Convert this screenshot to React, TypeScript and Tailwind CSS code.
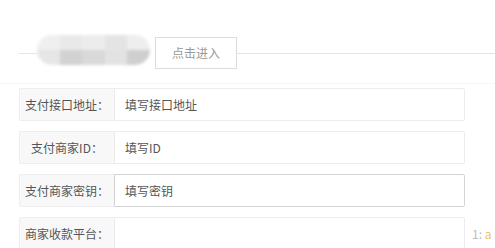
import React from 'react';

const rows = [
  { label: '支付接口地址：', value: '填写接口地址', focus: false },
  { label: '支付商家ID：', value: '填写ID', focus: false },
  { label: '支付商家密钥：', value: '填写密钥', focus: true },
  { label: '商家收款平台：', value: '', focus: false },
];

export default function App() {
  return (
    <div
      className="w-[495px] h-[248px] overflow-hidden bg-white text-[12px] text-[#555]"
      style={{ fontFamily: '"Noto Sans CJK SC", "Microsoft YaHei", sans-serif' }}
    >
      {/* header */}
      <div className="h-[84px] pt-[37px] border-b border-[#f6f6f6]">
        <div className="flex items-center h-[32px]">
          <div className="w-[19px]" />
          <div className="w-[18px] h-px bg-[#e6e6e6]" />
          {/* blurred name */}
          <div className="relative w-[113px] h-[30px] -mt-[6px] rounded-full overflow-hidden blur-[1.5px]">
            <div className="flex h-1/2">
              <div className="flex-1 bg-[#efefef]" />
              <div className="flex-1 bg-[#e9e9e9]" />
              <div className="flex-1 bg-[#ececec]" />
              <div className="flex-1 bg-[#e4e4e4]" />
              <div className="flex-1 bg-[#eeeeee]" />
            </div>
            <div className="flex h-1/2">
              <div className="flex-1 bg-[#e6e6e6]" />
              <div className="flex-1 bg-[#d2d2d2]" />
              <div className="flex-1 bg-[#d9d9d9]" />
              <div className="flex-1 bg-[#e2e2e2]" />
              <div className="flex-1 bg-[#cfcfcf]" />
            </div>
          </div>
          <div className="w-[5px]" />
          <button className="w-[82px] h-[32px] border border-[#dcdcdc] bg-white text-[12px] text-[#999]">
            点击进入
          </button>
          <div className="flex-1 h-px bg-[#e4e4e4]" />
        </div>
      </div>

      {/* form */}
      <div className="pl-[19px] pt-[4px] flex flex-col gap-[10px]">
        {rows.map((r, i) => (
          <div key={i} className="flex items-center">
            <div className="flex w-[446px] h-[33px]">
              <div className="w-[95px] flex items-center justify-center bg-[#f8f8f8] border border-[#eeeeee] border-r-0 rounded-l-[2px] text-[#555] whitespace-nowrap">
                {r.label}
              </div>
              <div
                className={`flex-1 flex items-center pl-[10px] bg-white border ${
                  r.focus ? 'border-[#d4d4d4]' : 'border-[#ececec]'
                } rounded-r-[2px] text-[12px] text-[#555]`}
              >
                {r.value}
              </div>
            </div>
            {i === 3 && (
              <div className="ml-[7px] text-[12px] text-[#bbb] whitespace-nowrap">
                1: <span className="text-[#e8c65a]">a</span>
              </div>
            )}
          </div>
        ))}
      </div>
    </div>
  );
}
